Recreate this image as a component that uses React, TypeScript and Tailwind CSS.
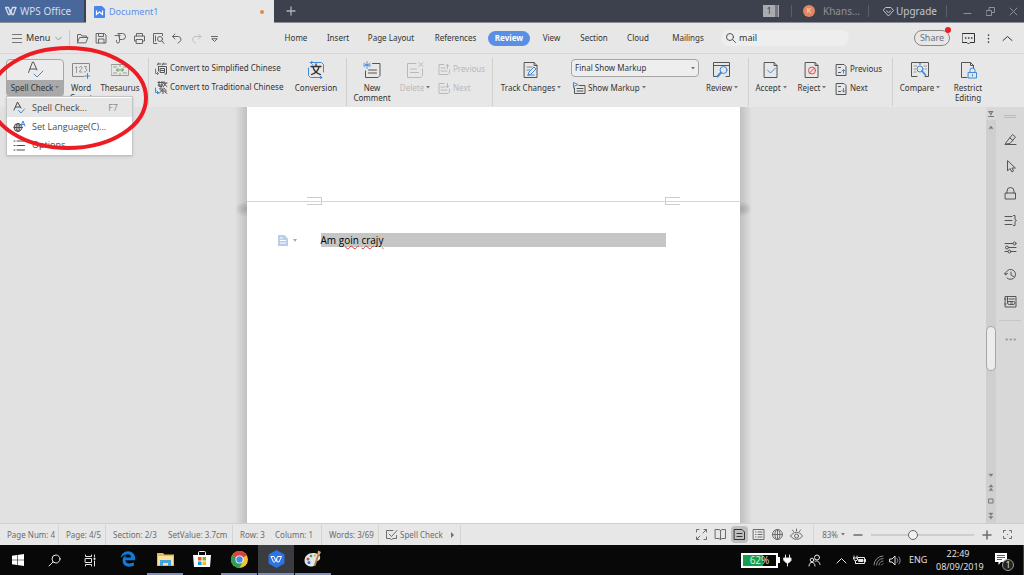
import type { ReactNode } from "react";
import { FaEdgeLegacy } from "react-icons/fa6";

type IconProps = { w?: number; h?: number; size?: number; children: ReactNode; className?: string };

// Line icon, drawn at its own pixel size
function Icon({ w, h, size = 14, children, className = "" }: IconProps) {
  const width = w ?? size;
  const height = h ?? size;
  return (
    <svg width={width} height={height} viewBox={`0 0 ${width} ${height}`} fill="none" stroke="currentColor" strokeWidth="1" strokeLinecap="round" strokeLinejoin="round" className={`shrink-0 ${className}`} aria-hidden="true">
      {children}
    </svg>
  );
}

const blue = "#3f8ad8";

function Caret() {
  return (
    <svg width="4" height="3" viewBox="0 0 4 3" className="inline-block shrink-0 fill-[#777] mb-0.5 ml-0.5" aria-hidden="true">
      <path d="M0 0h4L2 2.5z" />
    </svg>
  );
}

function Divider() {
  return <div className="w-px h-12 mt-1 bg-[#cfcfcf] shrink-0" />;
}

const quickTools = [
  {
    label: "Open",
    icon: <path d="M1.5 10.5v-8h3.5l1 1.5h4.500v1.500M1.500 10.500l2-5h8.500l-2 5z" />,
  },
  {
    label: "Save",
    icon: <path d="M1.500 1.500h8l1.500 1.500v8h-9.500zM3.500 1.500v3h5v-3M3.500 11v-4h5.500v4" />,
  },
  {
    label: "Export to PDF",
    icon: <path d="M4 1.500h4.500a2.500 2.500 0 0 1 0 6H5.500v-3M5.500 7.500v2a1.500 1.500 0 0 1-3 0v-1M1 3.500h5M4.500 2l1.500 1.500L4.500 5" />,
  },
  {
    label: "Print",
    icon: <path d="M3.500 4V1.500h6V4M3 9H1.500V4h10v5H10M3.500 7.500h6v4h-6z" />,
  },
  {
    label: "Print Preview",
    icon: <><path d="M5 11.500H1.500v-10h9v2" /><circle cx="8" cy="7" r="2.500" /><path d="M10 9l2 2.500M3.500 4v5" /></>,
  },
  {
    label: "Undo",
    icon: <path d="M4 2L1.500 4.500L4 7M1.500 4.500h6a3 3 0 0 1 1 5.500L7 11" />,
  },
];

const tabs = [
  { label: "Home", width: "w-[42px]" },
  { label: "Insert", width: "w-[42px]" },
  { label: "Page Layout", width: "w-[64px]" },
  { label: "References", width: "w-[65px]" },
  { label: "Review", width: "w-[42px]", active: true },
  { label: "View", width: "w-[43px]" },
  { label: "Section", width: "w-[42px]" },
  { label: "Cloud", width: "w-[46px]" },
  { label: "Mailings", width: "w-[54px]" },
];

function TitleBar() {
  return (
    <header className="flex h-[23px] shrink-0 bg-[#3d414e] text-[#aeb1b9] border-b border-[#8b8e96]">
      <button className="flex items-center w-[84px] pl-[5px] gap-[3px] bg-[#48689b] text-[#d5dcea] text-[10px] whitespace-nowrap shrink-0">
        <Icon w={12} h={10}>
          <path d="M.5 1.500h3l2 6 2-6h3.500L8.500 8.500H7L5.500 4M.5 1.500l3 7H5" strokeWidth="1.300" />
        </Icon>
        WPS Office
      </button>
      <div className="flex items-center w-[188px] h-[23px] ml-0.5 px-2 bg-[#e7e7e7] shrink-0">
        <svg width="11" height="12" viewBox="0 0 11 12" aria-hidden="true">
          <path d="M1 0h7l3 3v8a1 1 0 0 1-1 1H1a1 1 0 0 1-1-1V1a1 1 0 0 1 1-1z" fill="#4a86e8" />
          <path d="M2.500 4.500v4l3-2.500 3 2.500v-4" stroke="#fff" strokeWidth="1.200" fill="none" />
        </svg>
        <span className="ml-1 text-[9px] text-[#5b90ea]">Document1</span>
        <span className="ml-auto mr-0.5 size-1 rounded-full bg-[#e08a45]" />
      </div>
      <button aria-label="New tab" className="ml-3">
        <Icon size={10}><path d="M5 1v8M1 5h8" strokeWidth="1.300" /></Icon>
      </button>
      <div className="flex items-center ml-auto pr-1.5 text-[9px]">
        <span className="flex h-3 mr-3">
          <span className="w-3 bg-[#a9abb0] text-[#3d414e] leading-3 text-center">1</span>
          <span className="w-1 border-r border-[#a9abb0] bg-[#74777f]" />
        </span>
        <span className="w-px h-3 bg-[#5a5e69]" />
        <span className="flex items-center justify-center ml-[11px] size-3 rounded-full bg-[#e58663] text-[#f8e4dc] text-[7px]">K</span>
        <span className="w-[45px] ml-2 text-[#8e919a] text-[10px]">Khans...</span>
        <span className="w-px h-3 bg-[#5a5e69]" />
        <button className="flex items-center w-[77px] pl-3.5 gap-0.5 text-[#c4c6cb] text-[10px]">
          <Icon w={11} h={11}><path d="M3 1.500h5l2.500 3L5.500 10 .5 4.500zM3.500 5l2 1.500 2-1.500" /></Icon>
          Upgrade
        </button>
        <span className="w-px h-3 bg-[#5a5e69]" />
        <button aria-label="Minimize" className="ml-4 text-[#8e919a]"><Icon size={9}><path d="M1 6.500h7" /></Icon></button>
        <button aria-label="Restore" className="ml-3.5 text-[#8e919a]"><Icon size={9}><path d="M.5 3.500h5v5h-5zM3 3V.5h5.500v5H6" /></Icon></button>
        <button aria-label="Close" className="ml-3.5 text-[#8e919a]"><Icon size={9}><path d="M1 1l7 7M8 1L1 8" /></Icon></button>
      </div>
    </header>
  );
}

function TabRow() {
  return (
    <nav className="flex items-center h-[31px] shrink-0 border-b border-[#d8d8d8] text-[8px]">
      <button className="flex items-center w-[69px] pl-3 text-[9px] shrink-0">
        <Icon w={10} h={10} className="text-[#777]"><path d="M0 1.500h10M0 5.500h10M0 9.500h10" /></Icon>
        <span className="ml-1">Menu</span>
        <Icon w={7} h={5} className="ml-auto mr-[7px] text-[#999]"><path d="M.5 1l3 3 3-3" /></Icon>
      </button>
      <div className="w-px h-4 bg-[#c8c8c8]" />
      <div className="flex items-center pl-1.5 w-[205px] gap-1.5 text-[#666] shrink-0">
        {quickTools.map((t) => (
          <button key={t.label} aria-label={t.label}><Icon size={13}>{t.icon}</Icon></button>
        ))}
        <button aria-label="Redo" className="text-[#c0c0c0]">
          <Icon size={13}><path d="M8.500 2L11 4.500 8.500 7M11 4.500H5a3 3 0 0 0-1 5.500L5.500 11" /></Icon>
        </button>
        <button aria-label="More tools">
          <Icon size={11}><path d="M2.500 3.500h6M3 6l2.500 2.500L8 6z" /></Icon>
        </button>
      </div>
      {tabs.map((t) => (
        <button key={t.label} className={`h-[15px] shrink-0 whitespace-nowrap ${t.width} ${t.active ? "rounded-full bg-[#5a8fe6] text-white font-bold" : ""}`}>
          {t.label}
        </button>
      ))}
      <label className="flex items-center w-32 h-4 ml-1.5 pl-[5px] gap-[3px] rounded-full bg-[#eeeeee]">
        <Icon size={10} className="text-[#555]"><circle cx="4" cy="4" r="3.500" /><path d="M6.500 6.500l3 3" /></Icon>
        <input aria-label="Search" defaultValue="mail" className="w-24 bg-transparent text-[9px] outline-none" />
      </label>
      <div className="flex items-center ml-auto pr-[11px]">
        <button className="relative w-9 h-4 rounded-full border border-[#888] text-[9px] leading-3 text-[#6d7080]">
          Share
          <span className="absolute -top-1 -right-0.5 size-1.5 rounded-full bg-[#ee1c25]" />
        </button>
        <button aria-label="Comments" className="ml-3">
          <Icon size={13}><path d="M.5 1.500h12v9H8l-1.500 1.500-1.500-1.500H.5z" /><path d="M3.500 6h.5M6.500 6h.500M9.500 6h.5" strokeWidth="1.300" /></Icon>
        </button>
        <button aria-label="More" className="ml-3"><Icon w={3} h={11}><path d="M1.500 2v.2M1.500 5.500v.2M1.500 9v.2" strokeWidth="1.500" /></Icon></button>
        <button aria-label="Collapse ribbon" className="ml-3"><Icon w={11} h={7}><path d="M1 5.500l4.500-4 4.500 4" /></Icon></button>
      </div>
    </nav>
  );
}

type ToolProps = { icon: ReactNode; label: ReactNode; width: string; caret?: boolean; disabled?: boolean };

function BigTool({ icon, label, width, caret, disabled }: ToolProps) {
  return (
    <button disabled={disabled} className={`flex flex-col items-center pt-[7px] leading-[10px] shrink-0 ${width} ${disabled ? "text-[#b9b9b9]" : ""}`}>
      <Icon size={18} className={disabled ? "" : "text-[#555]"}>{icon}</Icon>
      <span className="mt-1 whitespace-nowrap">{label}{caret && <Caret />}</span>
    </button>
  );
}

function SmallTool({ icon, label, caret, disabled }: { icon: ReactNode; label: string; caret?: boolean; disabled?: boolean }) {
  return (
    <button disabled={disabled} className={`flex items-center h-4 gap-0.5 whitespace-nowrap ${disabled ? "text-[#b9b9b9]" : ""}`}>
      <Icon size={13} className={disabled ? "" : "text-[#555]"}>{icon}</Icon>
      <span>{label}{caret && <Caret />}</span>
    </button>
  );
}

const spellIcon = (
  <>
    <path d="M2.500 11.500L6.500 1h1l3.500 8M4 8h6" />
    <path d="M8 13l3 3 6-6" stroke={blue} />
  </>
);

const pageIcon = <path d="M2.500 1.500h9.500l3 3v12H2.500zM12 1.500v3h3" />;

function SpellMenu() {
  return (
    <div role="menu" className="absolute left-0 top-[37px] z-10 w-[127px] py-px bg-white border border-[#c4c4c4] shadow text-[9px] text-[#4a4a4a] font-['Open_Sans','Noto_Sans',sans-serif]">
      <button role="menuitem" className="flex items-center w-full h-[19px] pl-1.5 pr-3.5 bg-[#e6e6e6]">
        <Icon size={13}>
          <path d="M1 9L4.500 1 8 7M2.500 6h4.500" /><path d="M5.500 9.500l2.500 2.500 3.500-4" stroke={blue} />
        </Icon>
        <span className="ml-1.5">Spell Check...</span>
        <span className="ml-auto text-[#888]">F7</span>
      </button>
      <button role="menuitem" className="flex items-center w-full h-[19px] pl-1.5">
        <Icon size={13}>
          <circle cx="5" cy="7.500" r="4" /><ellipse cx="5" cy="7.500" rx="2" ry="4" /><path d="M1 7.500h8M5 3.500v8" /><path d="M8 6l2-5 2 5M8.500 4.500h3" stroke={blue} />
        </Icon>
        <span className="ml-1.5">Set Language(C)...</span>
      </button>
      <button role="menuitem" className="flex items-center w-full h-[18px] pl-1.5">
        <Icon size={13}><path d="M1 2h1M1 6.500h1M1 11h1M4 2h7.500M4 6.500h7.500M4 11h7.500" /></Icon>
        <span className="ml-1.5">Options...</span>
      </button>
    </div>
  );
}

function Ribbon() {
  return (
    <section aria-label="Review" className="flex h-[53px] pl-1.5 shrink-0 text-[8px]">
      <div className="relative mt-[5px] w-[58px] h-[38px] shrink-0">
        <button className="flex flex-col w-full h-full rounded-sm border border-[#a8a8a8] bg-[#ebebeb] overflow-hidden">
          <span className="flex items-center justify-center h-5 w-full text-[#555]"><Icon size={18}>{spellIcon}</Icon></span>
          <span className="flex-1 w-full pt-0.5 bg-[#a9a9a9] whitespace-nowrap">Spell Check<Caret /></span>
        </button>
        <SpellMenu />
      </div>
      <BigTool width="w-[34px]" label={<>Word<br />Count</>} icon={<>
        <path d="M12 15.500H.5v-13h17v8" className="text-[#888]" />
        <path d="M3.500 6.500L4.500 5.500v6M7.500 6.500c0-1.500 2.500-1.500 2.500 0 0 1.500-2.500 3-2.500 4.500H10M12.500 5.500h2l-1 2c2 0 2 3.500-1 3.500" strokeWidth=".7" className="text-[#777]" />
        <path d="M15.500 12.500v5M13 15h5" stroke={blue} />
      </>} />
      <BigTool width="w-[44px]" label="Thesaurus" icon={<>
        <path d="M.5 3.500h17v11H.5zM2.500 6h3M12.500 6h3M2.500 12h3M12.500 12h3M9 3.500v2M9 12.500v2" className="text-[#999]" />
        <path d="M5.500 9h7M7 7.500L5.500 9 7 10.500M11 7.500L12.500 9 11 10.500" stroke="#55a630" />
      </>} />
      <div className="w-1.5 shrink-0" />
      <Divider />
      <div className="flex flex-col w-[140px] pl-1.5 pt-1.5 gap-[3px] shrink-0">
        <SmallTool label="Convert to Simplified Chinese" icon={<>
          <path d="M3.500 1L2.500 3M3 2h3M8.500 1l-1 2M8 2h3.500M3.500 4.500V9M4.500 4.500h7v7.500h-1.500M5.500 6.500h4v4h-4zM5.500 8.500h4" />
          <path d="M.5 7v4.500h3M2 10l1.500 1.500L2 13" stroke={blue} />
        </>} />
        <SmallTool label="Convert to Traditional Chinese" icon={<>
          <path d="M3 1.500h4.500M3 4h4.500M4 .5v5h3v-5M9 .5v2M8.500 2h3.500M11 2L8.500 5.500M9 3l3 2.500M6.500 6L4.500 8h4l-3 2h6M8 10v3M5.500 11L4 12.500M10 11l2 1.500M9 7l1.500 2" />
          <path d="M.5 7v4.500h3M2 10l1.500 1.500L2 13" stroke={blue} />
        </>} />
      </div>
      <BigTool width="w-[54px]" label="Conversion" icon={<>
        <path d="M3 1.500h11.500l2 2V11M5.500 0L3.500 1.500l2 2M15 16.500H3.500l-2-2V7M13 15l2 1.500-2 1.500" stroke={blue} />
        <path d="M9 3v2M4 5.500h10M6 6c1 4 4 6.500 7.500 7.500M12 6c-1 4-4 6.500-7.500 7.500" strokeWidth="1.300" className="text-[#333]" />
      </>} />
      <div className="w-[3px] shrink-0" />
      <Divider />
      <BigTool width="w-[50px]" label={<>New<br />Comment</>} icon={<>
        <path d="M9.500 2.500h7.500v12l-2 2H2.500V10M5.500 9h8M5.500 12h8" />
        <path d="M4 .5v7M1 2.500l6 3M7 2.500l-6 3M.5 4h7" stroke={blue} strokeWidth=".8" />
      </>} />
      <BigTool disabled caret width="w-[36px]" label="Delete" icon={
        <path d="M10 2.500H1.500v14h13l2-2V8M4.500 8h6M4.500 11.500h8M13 1.500l4 4M17 1.500l-4 4" />
      } />
      <div className="flex flex-col w-14 pl-[5px] pt-[7px] gap-[3px] shrink-0">
        <SmallTool disabled label="Previous" icon={<path d="M6 1.500H1v10h9l1.500-1.500V7M3 5h4M3 8h6M9.500 5.500v-4M8 3l1.500-1.500L11 3" />} />
        <SmallTool disabled label="Next" icon={<path d="M6 1.500H1v10h9l1.500-1.500V7M3 5h4M3 8h6M9.500 1.500v4M8 4l1.500 1.500L11 4" />} />
      </div>
      <div className="w-[3px] shrink-0" />
      <Divider />
      <BigTool caret width="w-[76px]" label="Track Changes" icon={<>
        {pageIcon}
        <path d="M5 6h5M5 9h3" className="text-[#888]" />
        <path d="M6 14l1-3 5-5 2 2-5 5zM6 14h6" stroke={blue} />
      </>} />
      <div className="flex flex-col pl-0.5 pt-[5px] gap-[3px] shrink-0">
        <div className="relative">
          <select aria-label="Markup view" className="block appearance-none w-32 h-[18px] pl-[3px] rounded-sm border border-[#a5a5a5] bg-[#eeeeee]">
            <option>Final Show Markup</option>
          </select>
          <svg width="4" height="3" viewBox="0 0 4 3" className="absolute right-1 top-2 fill-[#777] pointer-events-none" aria-hidden="true"><path d="M0 0h4L2 2.500z" /></svg>
        </div>
        <div className="pl-0.5">
          <SmallTool caret label="Show Markup" icon={<>
            <path d="M6 3.500h6v8H1.500V6M4 6.500h6M4 9h6" />
            <path d="M.5 6V.5L5 2.500.5 4.500" stroke={blue} />
          </>} />
        </div>
      </div>
      <BigTool caret width="w-[46px]" label="Review" icon={<>
        <path d="M4 15.500H.5v-14h16v14H13M.5 4.500h16" />
        <circle cx="10.500" cy="9" r="3.500" stroke={blue} /><path d="M8 11.500L4.500 15.500" stroke={blue} strokeWidth="2" />
      </>} />
      <div className="w-[3px] shrink-0" />
      <Divider />
      <BigTool caret width="w-[44px]" label="Accept" icon={<>{pageIcon}<path d="M5.500 9l3 3 5-5" stroke={blue} /></>} />
      <BigTool caret width="w-[38px]" label="Reject" icon={<>{pageIcon}<circle cx="9" cy="9.500" r="3.500" stroke="#e0484d" /><path d="M6.500 12l5-5" stroke="#e0484d" /></>} />
      <div className="flex flex-col w-[61px] pl-1 pt-[7px] gap-[3px] shrink-0">
        <SmallTool label="Previous" icon={<><path d="M1.500 1.500h7.500l2 2v9H1.500zM3.500 4.500h2M3.500 9.500h2" /><path d="M8.500 10V6.500M7 8l1.500-1.500L10 8" stroke={blue} /></>} />
        <SmallTool label="Next" icon={<><path d="M1.500 1.500h7.500l2 2v9H1.500zM3.500 4.500h2M3.500 9.500h2" /><path d="M8.500 6.500V10M7 8.500L8.500 10 10 8.500" stroke={blue} /></>} />
      </div>
      <Divider />
      <BigTool caret width="w-[54px]" label="Compare" icon={<>
        <path d="M6 15.500H.5v-14h17v14H14M9 1.500v2" />
        <path d="M3 5h2.500M3 8h2M3 11h2M13 5h2.500M14 8h1.500" className="text-[#999]" />
        <circle cx="9" cy="8" r="3" stroke={blue} /><path d="M11 10l3.500 4" stroke={blue} strokeWidth="1.800" />
      </>} />
      <BigTool width="w-[42px]" label={<>Restrict<br />Editing</>} icon={<>
        <path d="M8 16.500H2.500v-15h9l3 3V7M11.500 1.500v3h3" />
        <path d="M9.500 11.500h8v5.500h-8zM11 11.500V9.500a2.500 2.500 0 0 1 5 0v2M13.500 13.500v1.500" stroke={blue} />
      </>} />
    </section>
  );
}

const sideTools = [
  { label: "Style", icon: <path d="M1 11.500h11M2 9.500l6.500-8 3 2.500-5.500 6.500-4 .5zM6 5l3 2.500" /> },
  { label: "Select", icon: <path d="M3.500 1v10l2.500-2.500 2 3.500 1.500-1-1.500-3h3z" /> },
  { label: "Protect", icon: <path d="M1.500 6h10v6h-10zM3 6V4a3.500 3.500 0 0 1 7 0v2" /> },
  { label: "Outline", icon: <path d="M1 2.500h7M1 6.500h7M1 10.500h7M9.500 1.500h1.500v4l1.500 1-1.500 1v4H9.500" /> },
  { label: "Settings", icon: <><path d="M1 2.500h8M4.500 6.500H12M1 10.500h3M7 10.500h5" /><circle cx="10.500" cy="2.500" r="1.500" /><circle cx="3" cy="6.500" r="1.500" /><circle cx="5.500" cy="10.500" r="1.500" /></> },
  { label: "History", icon: <path d="M1.500 6.500a5 5 0 1 1 1.500 3.500M.5 5l1 2 2-1.500M7 4v3l2.500 1.500" /> },
  { label: "Backup", icon: <path d="M1.500 1.500h10.500v10.500H1.500zM3.500 1.500v6M5 4h5.500M5 9.500a1.500 1.500 0 0 1 0-3h4.500a1.500 1.500 0 0 1 0 3zM6.500 8h2M.5 4h1.500M.5 9h1.500" /> },
];

function Workspace() {
  return (
    <main className="flex flex-1 min-h-0 bg-[#e1e1e1]">
      <div className="flex-1 flex justify-center overflow-hidden">
        <div className="w-3 pt-[94px] bg-linear-to-r from-[#e1e1e1] to-[#c0c0c0]">
          <div className="h-4 bg-radial-[at_100%_50%] from-[#a4a4a4] to-transparent to-70%" />
        </div>
        <article className="flex flex-col w-[493px] bg-white">
          {/* End of the page above, with its margin marks */}
          <div className="flex items-end justify-between h-[94px] px-[60px] shrink-0">
            <div className="w-[15px] h-1 border-t border-[#ccc] border-r" />
            <div className="w-[15px] h-1 border-t border-[#ccc] border-l" />
          </div>
          <div className="h-px bg-[#d6d6d6] shrink-0" />
          <div className="flex items-start justify-between px-[60px]">
            <div className="w-[15px] h-[3px] border-b border-[#ccc] border-r" />
            <div className="w-[15px] h-[3px] border-b border-[#ccc] border-l" />
          </div>
          <div className="flex items-center mt-7 pl-[31px] pr-[74px]">
            <svg width="10" height="11" viewBox="0 0 10 11" aria-hidden="true">
              <path d="M0 0h6.500L10 3.500V11H0z" fill="#b5cee9" /><path d="M2 3h3M2 5.500h6M2 8h6" stroke="#fff" />
            </svg>
            <svg width="4" height="3" viewBox="0 0 4 3" className="ml-[5px] fill-[#aaa]" aria-hidden="true"><path d="M0 0h4L2 3z" /></svg>
            <p className="flex-1 ml-6 h-3.5 bg-[#c6c6c6] font-['Open_Sans','Noto_Sans',sans-serif] text-[10px] leading-[14px] text-black">
              Am{" "}
              <span className="underline decoration-wavy decoration-[#d33] decoration-1 underline-offset-1">goin</span>{" "}
              <span className="underline decoration-wavy decoration-[#d33] decoration-1 underline-offset-1">crajy</span>
            </p>
          </div>
        </article>
        <div className="w-3 pt-[94px] bg-linear-to-l from-[#e1e1e1] to-[#c0c0c0]">
          <div className="h-4 bg-radial-[at_0%_50%] from-[#a4a4a4] to-transparent to-70%" />
        </div>
      </div>

      {/* Scrollbar */}
      <div className="flex flex-col items-center w-2.5 bg-[#cfcfcf] text-[#777] shrink-0">
        <Icon w={10} h={13} className="bg-[#d8d8d8]"><path d="M3 4.500h4L5 7zM5 5v3M2.500 9.500h5" /></Icon>
        <Icon w={10} h={14}><path d="M3 8.500L5 6l2 2.500z" fill="currentColor" strokeWidth=".3" /></Icon>
        <div className="flex-[192]" />
        <div className="w-2.5 h-[45px] rounded-full border border-[#a6a6a6] bg-[#ececec] shrink-0" />
        <div className="flex-[98]" />
        <Icon w={10} h={12}><path d="M3 5h4L5 7.500z" fill="currentColor" strokeWidth=".3" /></Icon>
        <Icon w={10} h={13}><path d="M3 6L5 3.500 7 6zM3 9.500L5 7l2 2.500z" fill="currentColor" strokeWidth=".3" /></Icon>
        <Icon w={10} h={14}><rect x="3" y="5" width="4" height="4" /></Icon>
        <Icon w={10} h={15}><path d="M3 5h4L5 7.500zM3 8.500h4L5 11z" fill="currentColor" strokeWidth=".3" /></Icon>
      </div>

      <aside className="flex flex-col items-center w-7 pt-2 bg-[#d8d8d8] text-[#555] shrink-0">
        <div className="w-3 h-[3px] border-y border-[#bbb]" />
        <div className="flex flex-col gap-3.5 mt-[15px]">
          {sideTools.map((t) => (
            <button key={t.label} aria-label={t.label}><Icon size={13}>{t.icon}</Icon></button>
          ))}
        </div>
        <div className="w-[22px] h-px mt-3 bg-[#c6c6c6]" />
        <button aria-label="More panels" className="mt-4"><Icon w={11} h={5}><path d="M1.500 2.500h.5M5.500 2.500H6M9.500 2.500h.5" strokeWidth="2" className="text-[#999]" /></Icon></button>
      </aside>
    </main>
  );
}

const statusCells = [
  { text: "Page Num: 4", width: "w-[59px]", line: true },
  { text: "Page: 4/5", width: "w-[47px]", line: true },
  { text: "Section: 2/3", width: "w-[55px]" },
  { text: "SetValue: 3.7cm", width: "w-[72px]", line: true },
  { text: "Row: 3", width: "w-[35px]" },
  { text: "Column: 1", width: "w-[54px]", line: true },
  { text: "Words: 3/69", width: "w-[57px]", line: true },
];

const viewTools = [
  { label: "Full screen", icon: <path d="M11.500 1.500L8 5M1.500 11.500L5 8M1.500 4V1.500H4M11.500 9v2.500H9M9 1.500h2.500V4M4 11.500H1.500V9" /> },
  { label: "Reading layout", icon: <path d="M1.500 1.500H5l1.500 1 1.500-1h3.500v9H8l-1.500 1-1.500-1H1.500zM6.500 2.500v9" /> },
  { label: "Page view", active: true, icon: <path d="M1.500 1.500h7.500l2.500 2.500v7.500h-10zM4 5.500h5M4 8.500h5" /> },
  { label: "Outline view", icon: <path d="M1.500 1.500h10.500v10H1.500zM3.500 4h.5M3.500 6.500H4M3.500 9h.5M6 4h4M6 6.500h4M6 9h4" /> },
  { label: "Web layout", icon: <><circle cx="6.500" cy="6.500" r="5" /><ellipse cx="6.500" cy="6.500" rx="2.500" ry="5" /><path d="M1.500 6.500h10M6.500 1.500v10" /></> },
  { label: "Eye protection", icon: <><path d="M.5 8c3-5 9-5 12 0-3 4.500-9 4.500-12 0z" /><circle cx="6.500" cy="8" r="2" /><path d="M6.500 1v2M2.500 2l1 1.500M10.500 2l-1 1.500" /></> },
];

function StatusBar() {
  return (
    <footer className="flex items-center h-[22px] shrink-0 border-t border-[#cfcfcf] bg-[#e7e7e7] text-[8px] text-[#6c6c6c]">
      {statusCells.map((c) => (
        <div key={c.text} className={`h-5 pl-[7px] leading-5 whitespace-nowrap shrink-0 ${c.width} ${c.line ? "border-r border-[#d4d4d4]" : ""}`}>
          {c.text}
        </div>
      ))}
      <button className="flex items-center h-5 w-[82px] pl-1.5 gap-0.5 border-r border-[#d4d4d4] whitespace-nowrap shrink-0">
        <Icon size={13}><path d="M8 2.500H1.500v8H5l1.500 1L8 10.500h3.500v-3M4 6l2.500 2.500L12 2.500" /></Icon>
        Spell Check
        <svg width="4" height="6" viewBox="0 0 4 6" className="ml-1.5 fill-[#667085]" aria-hidden="true"><path d="M0 0l3 3-3 3z" /></svg>
      </button>
      <div className="flex items-center ml-auto pr-[11px]">
        {viewTools.map((t) => (
          <button key={t.label} aria-label={t.label} className={`flex items-center justify-center w-[17px] h-[17px] mr-0.5 rounded-sm ${t.active ? "bg-[#bfbfbf] text-[#333]" : ""}`}>
            <Icon size={13}>{t.icon}</Icon>
          </button>
        ))}
        <div className="w-px h-5 ml-1.5 mr-2 bg-[#d4d4d4]" />
        <span>83%</span>
        <svg width="4" height="3" viewBox="0 0 4 3" className="ml-[3px] fill-[#777]" aria-hidden="true"><path d="M0 0h4L2 2.500z" /></svg>
        <button aria-label="Zoom out" className="ml-2"><Icon size={10}><path d="M1 5h8" strokeWidth="1.500" /></Icon></button>
        <input type="range" aria-label="Zoom" defaultValue={40} className="appearance-none w-[103px] h-2.5 mx-2 bg-linear-to-b from-transparent from-40% via-[#b5b5b5] via-50% to-transparent to-60% [&::-webkit-slider-thumb]:appearance-none [&::-webkit-slider-thumb]:size-2.5 [&::-webkit-slider-thumb]:rounded-full [&::-webkit-slider-thumb]:border [&::-webkit-slider-thumb]:border-[#666] [&::-webkit-slider-thumb]:bg-[#f0f0f0]" />
        <button aria-label="Zoom in"><Icon size={10}><path d="M1 5h8M5 1v8" strokeWidth="1.500" /></Icon></button>
        <button aria-label="Fit page" className="ml-2.5"><Icon size={11}><path d="M1.500 3.500v-2h2M7.500 1.500h2v2M9.500 7.500v2h-2M3.500 9.500h-2v-2M5.500 5.500h.2" /></Icon></button>
      </div>
    </footer>
  );
}

const systemApps = [
  {
    label: "Start",
    icon: <svg width="12" height="12" viewBox="0 0 12 12" fill="#fff"><path d="M0 1.700L5 1v4.700H0zM5.600.9L12 0v5.700H5.600zM0 6.300h5V11l-5-.7zM5.600 6.300H12V12l-6.400-.9z" /></svg>,
  },
  {
    label: "Search",
    icon: <Icon size={13}><circle cx="8" cy="5" r="4" /><path d="M5 8l-4 4" /></Icon>,
  },
  {
    label: "Task View",
    icon: <Icon size={13}><path d="M1.500 1v1.500h6V1M1.500 4.500h6v4h-6zM1.500 12v-1.500h6V12M10.500 1v1.500M10.500 7v5" /><path d="M10.500 4.500v.5" strokeWidth="2" /></Icon>,
  },
];

const apps = [
  { label: "Edge", icon: <FaEdgeLegacy size={16} color="#0e7bd8" /> },
  {
    label: "File Explorer",
    open: true,
    icon: (
      <svg width="17" height="15" viewBox="0 0 17 15">
        <path d="M0 1h6l1.500 1.500H17V14H0z" fill="#e9b94e" /><path d="M1 4h15v9H1z" fill="#fbe19a" /><path d="M3 14V8h11v6h-3v-3H6v3z" fill="#45a5dd" />
      </svg>
    ),
  },
  {
    label: "Store",
    icon: (
      <svg width="18" height="18" viewBox="0 0 18 18">
        <path d="M5.500 5V2.500a1 1 0 0 1 1-1h5a1 1 0 0 1 1 1V5" fill="none" stroke="#fff" /><path d="M0 5h18l-1 12H1z" fill="#fff" />
        <path d="M5 7h3.500v3.500H5z" fill="#f04e23" /><path d="M9.500 7H13v3.500H9.500z" fill="#7eb900" /><path d="M5 11.500h3.500V15H5z" fill="#00a2ed" /><path d="M9.500 11.500H13V15H9.500z" fill="#fdb813" />
      </svg>
    ),
  },
  {
    label: "Chrome",
    open: true,
    icon: (
      <svg width="17" height="17" viewBox="0 0 17 17">
        <circle cx="8.500" cy="8.500" r="8.500" fill="#f4c430" />
        <path d="M8.500 8.500L1.100 4.300a8.500 8.500 0 0 1 14.800 0z" fill="#db4437" /><path d="M1.100 4.300a8.500 8.500 0 0 0 7.400 12.700l3.500-6.500-3.500-2z" fill="#2f9e56" />
        <circle cx="8.500" cy="8.500" r="4" fill="#fff" /><circle cx="8.500" cy="8.500" r="3.200" fill="#4a86e8" />
      </svg>
    ),
  },
  {
    label: "WPS",
    open: true,
    active: true,
    icon: (
      <svg width="17" height="18" viewBox="0 0 17 18">
        <path d="M8.500 0L16.500 4.500v9L8.500 18 .5 13.500v-9z" fill="#2b74e2" /><path d="M3 6.500h3l2 5 1.500-5h4l-2.500 5.500H9.500L8 8.500M3 6.500l2.500 5.500h1.500" stroke="#fff" fill="none" />
      </svg>
    ),
  },
  {
    label: "Paint",
    open: true,
    icon: (
      <svg width="19" height="18" viewBox="0 0 19 18">
        <path d="M9 3c5 0 8 2.500 7 6-1 2-3 1.500-4 3s0 4-4 4.500c-4 0-7.500-2-7.500-6S4 3 9 3z" fill="#dce6f0" />
        <circle cx="4" cy="9" r="1.500" fill="#e04a3a" /><circle cx="7" cy="6" r="1.300" fill="#3aa655" /><circle cx="11" cy="5.500" r="1.200" fill="#f0b72f" /><circle cx="5" cy="12.500" r="1.500" fill="#3477d0" />
        <path d="M15 3L10.500 16" stroke="#c7782c" strokeWidth="1.800" /><path d="M14 .5l3 1.500-1.500 3-2-1z" fill="#d9b37a" />
      </svg>
    ),
  },
];

function Taskbar() {
  return (
    <div className="flex h-[30px] shrink-0 bg-[#080808] text-[#e8e8e8] font-['Open_Sans','Noto_Sans',sans-serif] text-[9px]">
      {systemApps.map((a) => (
        <button key={a.label} aria-label={a.label} className="flex items-center justify-center w-9 shrink-0">
          {a.icon}
        </button>
      ))}
      <div className="flex ml-0.5 gap-px">
        {apps.map((a) => (
          <button key={a.label} aria-label={a.label} className={`flex items-center justify-center w-9 shrink-0 border-b-2 ${a.open ? "border-[#7f8fbb]" : "border-transparent"} ${a.active ? "bg-[#3b3c40]" : ""}`}>
            {a.icon}
          </button>
        ))}
      </div>
      <div className="flex items-center ml-auto">
        <div className="relative flex items-center w-[37px] h-[15px] border-2 border-white">
          <div className="w-[62%] h-full bg-[#12a04a]" />
          <span className="absolute inset-0 text-center text-[10px] leading-[11px]">62%</span>
        </div>
        <div className="w-0.5 h-1.5 bg-white" />
        <Icon w={9} h={13} className="ml-[3px]"><path d="M2.500 1v3M6.500 1v3M1 4h7v2.500L5.500 9h-2L1 6.500zM4.500 9v3" fill="#fff" /></Icon>
        <Icon size={13} className="ml-4"><circle cx="9" cy="3.500" r="2.500" /><circle cx="4" cy="6" r="1.800" /><path d="M1 12c0-5 6-5 6 0M7 7.500c2-1.500 4.500 0 5 3" /></Icon>
        <Icon size={11} className="ml-[15px]"><path d="M1 8l4.500-4.500L10 8" /></Icon>
        <Icon w={13} h={10} className="ml-1.5"><path d="M5 2.500h6.500v6H3M12.500 4.500v2M1 1v2M4 1v2M.5 3h4v2l-2 1zM2.500 6v2.500" /><path d="M6 4.500h4v2H6z" fill="currentColor" /></Icon>
        <Icon size={11} className="ml-[7px] text-[#8a8a8a]"><path d="M1 10A9 9 0 0 1 10 1M3.500 10A6.500 6.500 0 0 1 10 3.500M6 10a4 4 0 0 1 4-4M8.500 10L10 8.500" /></Icon>
        <Icon w={13} h={11} className="ml-[5px]"><path d="M1 4h2l3-3v9L3 7H1z" /><path d="M8 3.500c1 1 1 3 0 4M10 2c1.500 2 1.500 5 0 7" className="text-[#999]" /></Icon>
        <span className="w-[27px] ml-[7px]">ENG</span>
        <div className="w-11 text-center leading-[13px] whitespace-nowrap">
          <div>22:49</div>
          <div>08/09/2019</div>
        </div>
        <div className="relative ml-3.5 mr-[11px]">
          <svg width="18" height="18" viewBox="0 0 18 18" aria-hidden="true">
            <path d="M1 2h12v9H7l-2.500 3v-3H1z" fill="#fff" /><path d="M3 4.500h8M3 6.500h8M3 8.500h5" stroke="#333" strokeWidth=".8" />
          </svg>
          <span className="absolute -right-0.5 -bottom-0.5 size-3 rounded-full border border-[#999] bg-[#222] text-center text-[9px] leading-[10px]">1</span>
        </div>
        <div className="w-px h-full bg-[#444]" />
      </div>
    </div>
  );
}

export default function App() {
  return (
    <div className="relative flex flex-col h-screen overflow-hidden bg-[#e7e7e7] text-[#333] font-['Noto_Sans','Open_Sans',sans-serif]">
      <TitleBar />
      <TabRow />
      <Ribbon />
      <Workspace />
      <StatusBar />
      <Taskbar />
      {/* Hand-drawn ring round the spell check menu */}
      <svg width="150" height="110" viewBox="0 0 150 110" className="absolute left-0 top-11 z-20 pointer-events-none" aria-hidden="true">
        <ellipse cx="68" cy="54" rx="78" ry="50" fill="none" stroke="#ed1c24" strokeWidth="4" />
      </svg>
    </div>
  );
}
